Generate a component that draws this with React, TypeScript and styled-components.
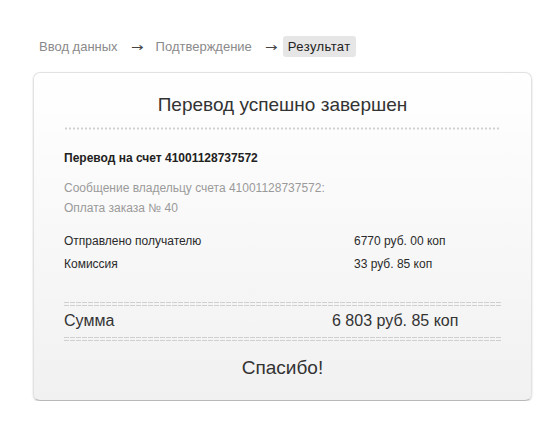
import React from "react";
import styled, { createGlobalStyle } from "styled-components";

const GlobalStyle = createGlobalStyle`
  body {
    margin: 0;
    background: #fff;
    font-family: "Liberation Sans", Arial, sans-serif;
  }
`;

const Page = styled.div`
  width: 560px;
  padding: 36px 0 0 33px;
  box-sizing: border-box;
`;

const Steps = styled.div`
  display: flex;
  align-items: center;
  gap: 12px;
  height: 21px;
  padding-left: 6px;
  font-size: 13px;
  color: #8a8a8a;
`;

const Arrow = styled.span`
  display: inline-block;
  width: 14px;
  text-align: center;
  font-family: "DejaVu Sans", sans-serif;
  color: #444;
  font-size: 12px;
  transform: scaleX(1.25);
`;

const Step = styled.span<{ $active?: boolean }>`
  line-height: 21px;
  margin-left: ${(p) => (p.$active ? "-7px" : "0")};
  padding: ${(p) => (p.$active ? "0 5px" : "0")};
  border-radius: 3px;
  background: ${(p) => (p.$active ? "#e6e6e6" : "transparent")};
  color: ${(p) => (p.$active ? "#222" : "#8a8a8a")};
  letter-spacing: ${(p) => (p.$active ? "0.4px" : "0")};
`;

const Card = styled.div`
  margin-top: 15px;
  width: 499px;
  height: 329px;
  box-sizing: border-box;
  padding: 19px 30px 0;
  border: 1px solid #e2e2e2;
  border-bottom-color: #b8b8b8;
  border-radius: 7px;
  background: linear-gradient(#fff, #f1f1f1);
  box-shadow: 0 1px 2px rgba(0, 0, 0, 0.18);
`;

const Heading = styled.div<{ $size: number }>`
  text-align: center;
  font-size: ${(p) => p.$size}px;
  line-height: 26px;
  color: #333;
`;

const Rule = styled.div<{ $double?: boolean }>`
  height: ${(p) => (p.$double ? "4px" : "3px")};
  background: ${(p) =>
    p.$double
      ? "repeating-linear-gradient(90deg, #cfcfcf 0 5px, transparent 5px 6px) top / 100% 1px no-repeat, repeating-linear-gradient(90deg, #cfcfcf 0 5px, transparent 5px 6px) bottom / 100% 1px no-repeat"
      : "radial-gradient(circle, #d0d0d0 0.9px, transparent 1.3px) 0 0 / 4px 3px repeat-x"};
`;

const Account = styled.div`
  margin-top: 20px;
  font-size: 12px;
  font-weight: bold;
  color: #222;
  line-height: 16px;
`;

const Message = styled.div`
  margin-top: 12px;
  font-size: 12px;
  line-height: 20px;
  color: #9a9a9a;
`;

const Table = styled.div`
  margin-top: 15px;
  display: grid;
  row-gap: 7px;
  margin-bottom: 30px;
`;

const Row = styled.div<{ $col: number; $size: number }>`
  display: grid;
  grid-template-columns: ${(p) => p.$col}px 1fr;
  font-size: ${(p) => p.$size}px;
  line-height: ${(p) => (p.$size > 14 ? 28 : 16)}px;
  color: ${(p) => (p.$size > 14 ? "#333" : "#2a2a2a")};
`;

const Thanks = styled(Heading)`
  margin-top: 14px;
`;

export default function App() {
  return (
    <Page>
      <GlobalStyle />
      <Steps>
        <Step>Ввод данных</Step>
        <Arrow>→</Arrow>
        <Step>Подтверждение</Step>
        <Arrow>→</Arrow>
        <Step $active>Результат</Step>
      </Steps>
      <Card>
        <Heading $size={19}>Перевод успешно завершен</Heading>
        <Rule style={{ marginTop: 9 }} />
        <Account>Перевод на счет 41001128737572</Account>
        <Message>
          Сообщение владельцу счета 41001128737572:
          <br />
          Оплата заказа № 40
        </Message>
        <Table>
          <Row $col={290} $size={12}>
            <span>Отправлено получателю</span>
            <span>6770 руб. 00 коп</span>
          </Row>
          <Row $col={290} $size={12}>
            <span>Комиссия</span>
            <span>33 руб. 85 коп</span>
          </Row>
        </Table>
        <Rule $double />
        <Row $col={268} $size={16} style={{ margin: "1px 0 2px" }}>
          <span>Сумма</span>
          <span>6 803 руб. 85 коп</span>
        </Row>
        <Rule $double />
        <Thanks $size={19}>Спасибо!</Thanks>
      </Card>
    </Page>
  );
}
